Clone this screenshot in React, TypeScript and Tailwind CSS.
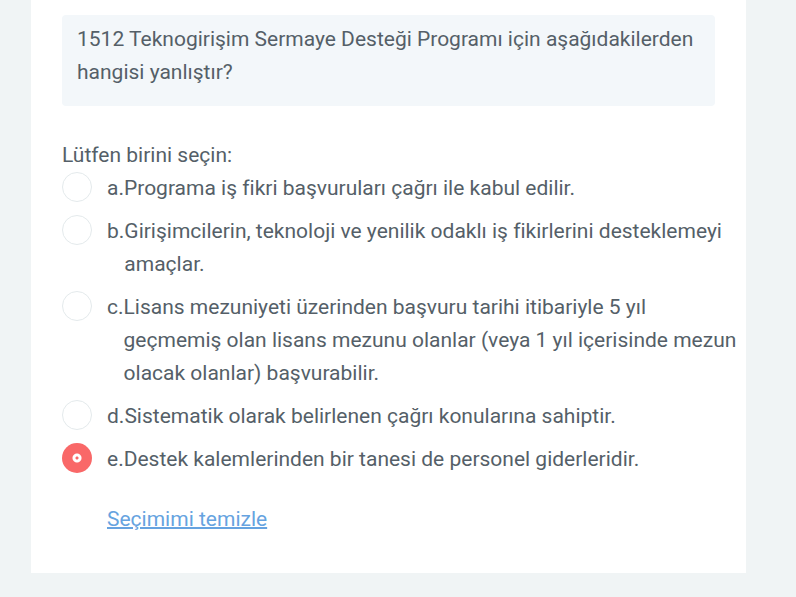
import { useState } from "react";

const options = [
  { key: "a", text: "Programa iş fikri başvuruları çağrı ile kabul edilir." },
  { key: "b", text: "Girişimcilerin, teknoloji ve yenilik odaklı iş fikirlerini desteklemeyi amaçlar." },
  { key: "c", text: "Lisans mezuniyeti üzerinden başvuru tarihi itibariyle 5 yıl geçmemiş olan lisans mezunu olanlar (veya 1 yıl içerisinde mezun olacak olanlar) başvurabilir." },
  { key: "d", text: "Sistematik olarak belirlenen çağrı konularına sahiptir." },
  { key: "e", text: "Destek kalemlerinden bir tanesi de personel giderleridir." },
];

export default function App() {
  const [selected, setSelected] = useState<string | null>("e");

  return (
    <div
      lang="tr"
      className="min-h-screen bg-[#f0f4f5] pr-[50px] pb-6 pl-[31px] font-['Roboto',sans-serif] text-[21px] leading-[33px] text-[#555f68]"
    >
      <main className="bg-white pt-[15px] pb-[37px] pl-[31px]">
        <div className="mr-[31px] rounded-[4px] bg-[#f3f7fa] px-[15px] pt-2 pb-[17px]">
          <p>1512 Teknogirişim Sermaye Desteği Programı için aşağıdakilerden hangisi yanlıştır?</p>
        </div>
        <fieldset className="mt-[33px] pr-2">
          <legend>Lütfen birini seçin:</legend>
          <div className="flex flex-col gap-[10px]">
            {options.map((option) => (
              <label key={option.key} className="flex items-start">
                <input
                  type="radio"
                  name="answer"
                  value={option.key}
                  checked={selected === option.key}
                  onChange={() => setSelected(option.key)}
                  className="mr-[15px] size-[30px] shrink-0 appearance-none rounded-full border border-[#e4eaec] bg-white checked:border-0 checked:bg-[radial-gradient(circle,#f96868_1px,#fff_2px,#fff_4px,#f96868_5px)]"
                />
                <span className="shrink-0">{option.key}.</span>
                <span>{option.text}</span>
              </label>
            ))}
          </div>
        </fieldset>
        <button
          type="button"
          onClick={() => setSelected(null)}
          className="mt-[27px] ml-[45px] text-[#66a3e0] underline decoration-2"
        >
          Seçimimi temizle
        </button>
      </main>
    </div>
  );
}
